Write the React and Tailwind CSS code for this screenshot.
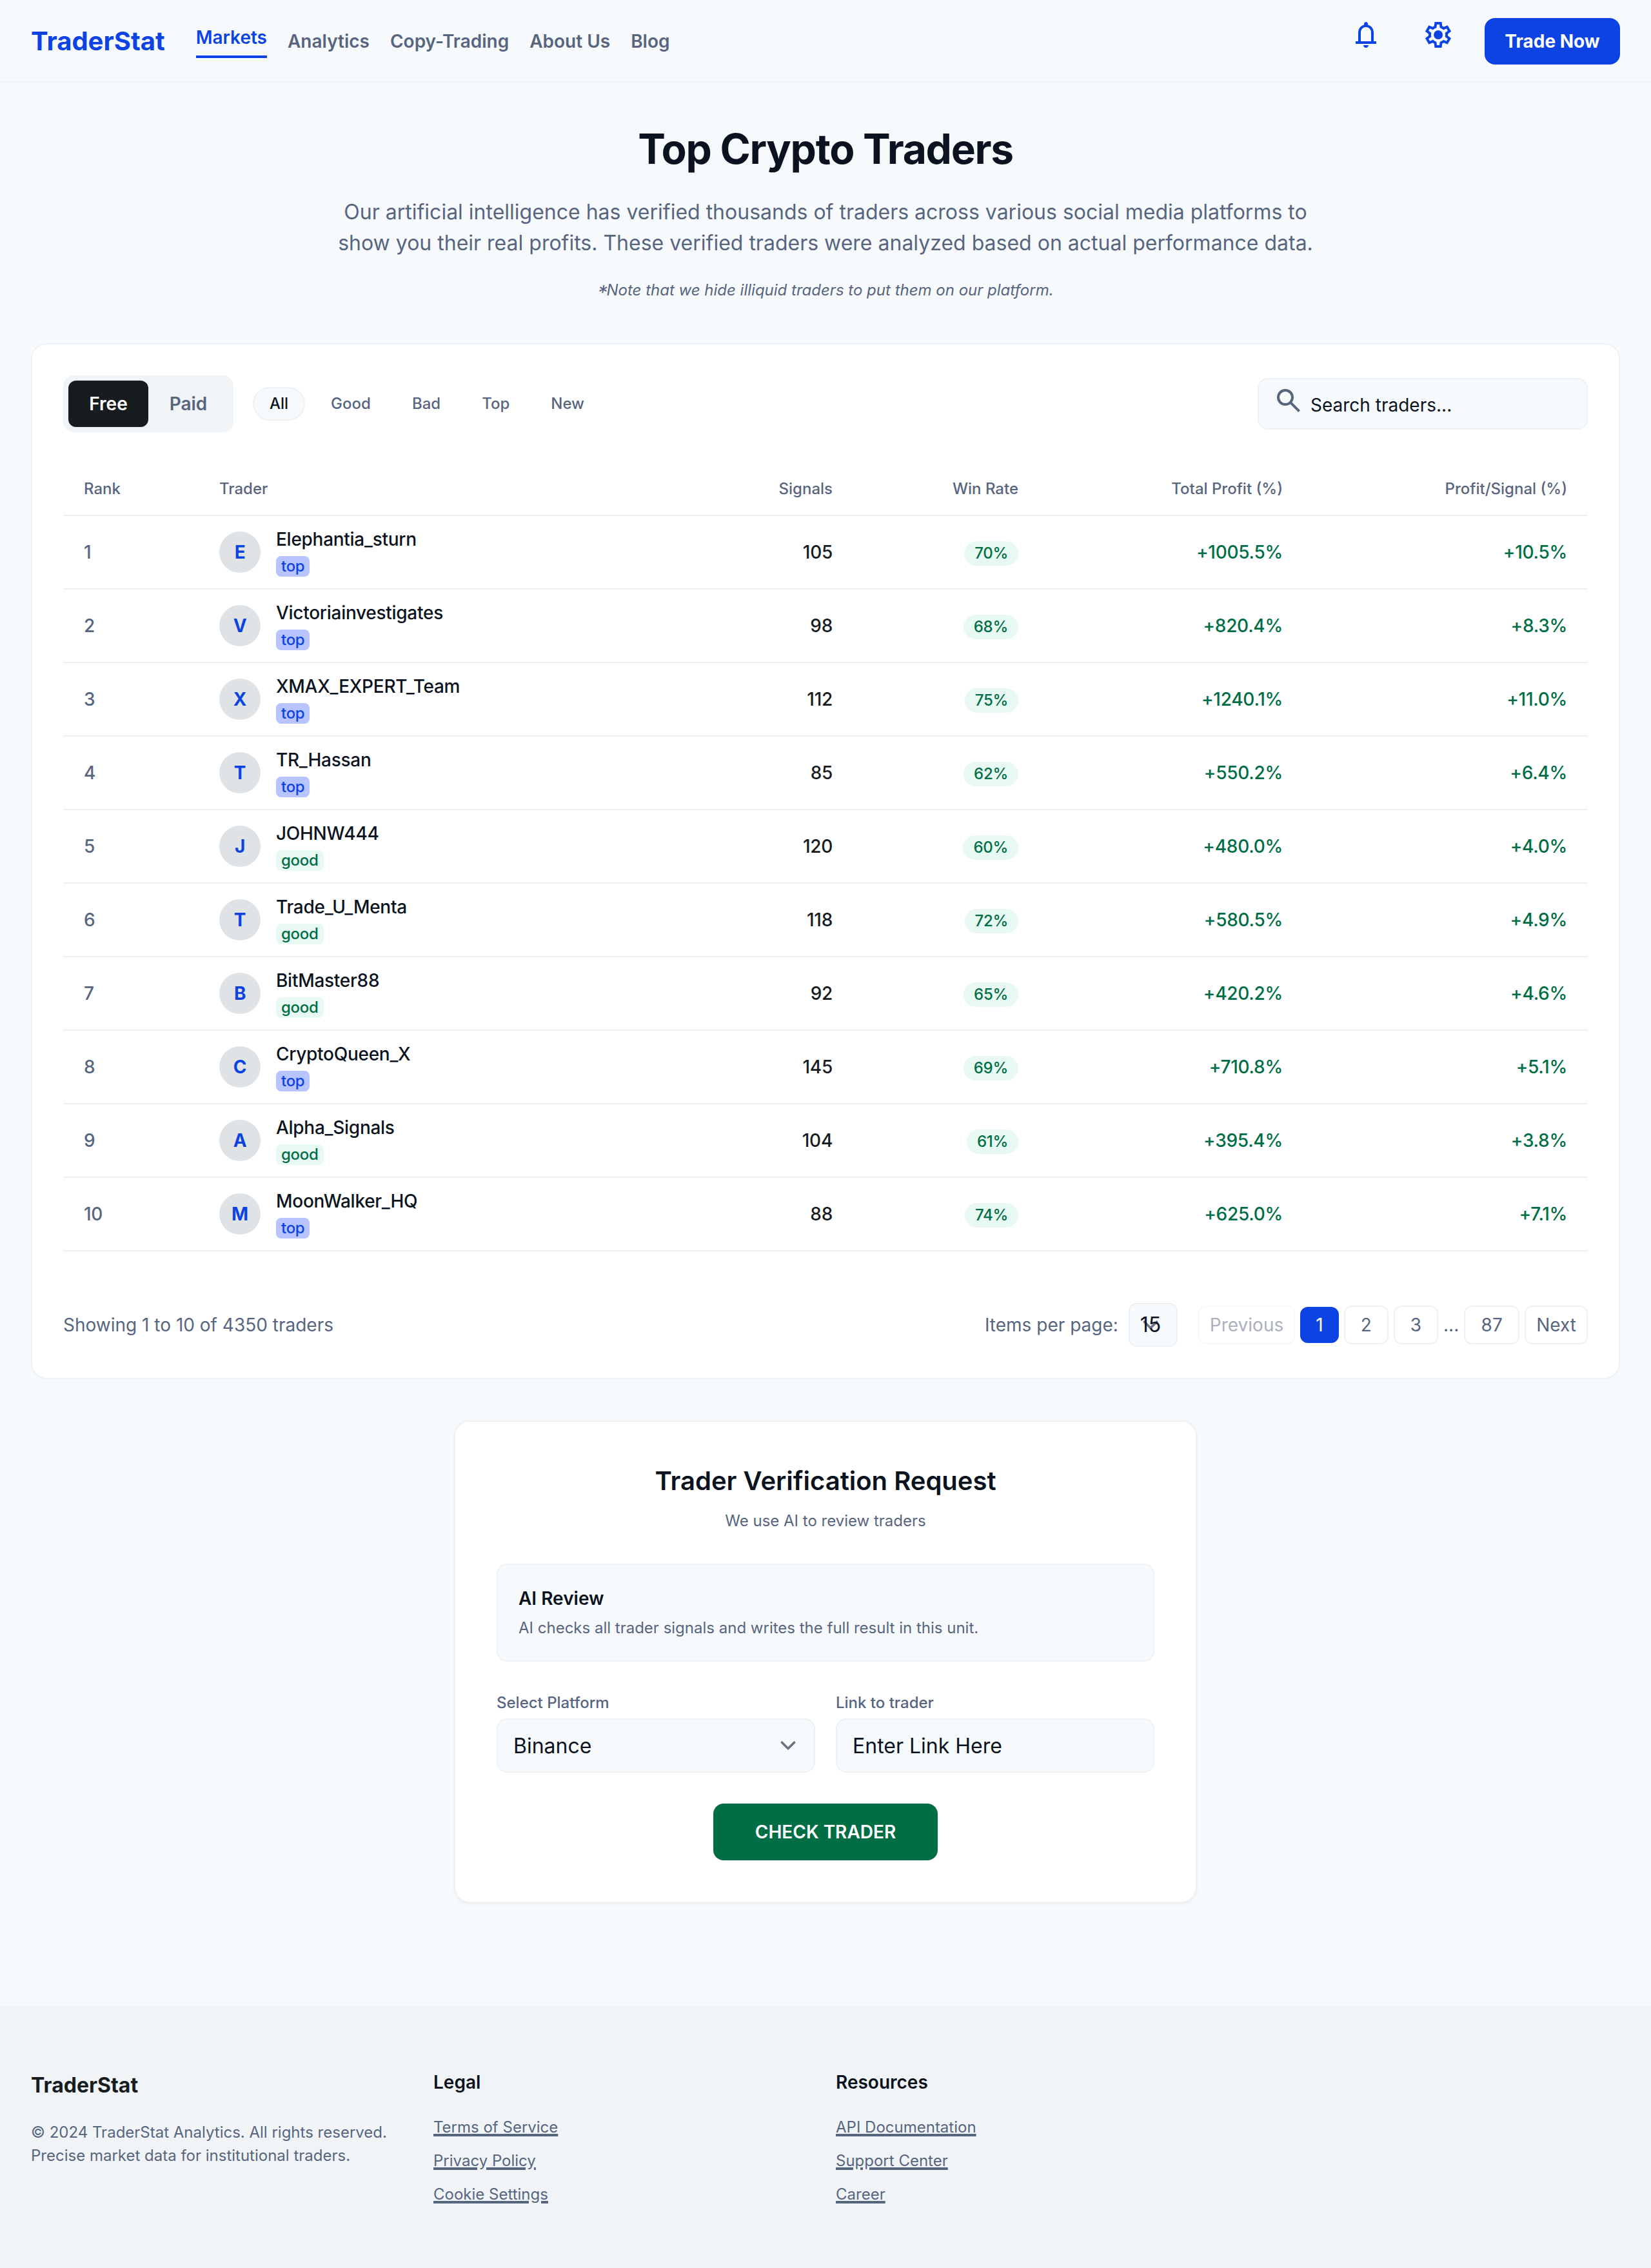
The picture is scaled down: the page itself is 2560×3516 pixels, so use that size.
import { useState } from 'react';
import clsx from 'clsx';

const navItems = ['Markets', 'Analytics', 'Copy-Trading', 'About Us', 'Blog'];

const filters = ['All', 'Good', 'Bad', 'Top', 'New'];

const traders = [
  { name: 'Elephantia_sturn', tag: 'top', signals: 105, winRate: '70%', profit: '+1005.5%', perSignal: '+10.5%' },
  { name: 'Victoriainvestigates', tag: 'top', signals: 98, winRate: '68%', profit: '+820.4%', perSignal: '+8.3%' },
  { name: 'XMAX_EXPERT_Team', tag: 'top', signals: 112, winRate: '75%', profit: '+1240.1%', perSignal: '+11.0%' },
  { name: 'TR_Hassan', tag: 'top', signals: 85, winRate: '62%', profit: '+550.2%', perSignal: '+6.4%' },
  { name: 'JOHNW444', tag: 'good', signals: 120, winRate: '60%', profit: '+480.0%', perSignal: '+4.0%' },
  { name: 'Trade_U_Menta', tag: 'good', signals: 118, winRate: '72%', profit: '+580.5%', perSignal: '+4.9%' },
  { name: 'BitMaster88', tag: 'good', signals: 92, winRate: '65%', profit: '+420.2%', perSignal: '+4.6%' },
  { name: 'CryptoQueen_X', tag: 'top', signals: 145, winRate: '69%', profit: '+710.8%', perSignal: '+5.1%' },
  { name: 'Alpha_Signals', tag: 'good', signals: 104, winRate: '61%', profit: '+395.4%', perSignal: '+3.8%' },
  { name: 'MoonWalker_HQ', tag: 'top', signals: 88, winRate: '74%', profit: '+625.0%', perSignal: '+7.1%' },
];

const footerColumns = [
  { title: 'Legal', links: ['Terms of Service', 'Privacy Policy', 'Cookie Settings'] },
  { title: 'Resources', links: ['API Documentation', 'Support Center', 'Career'] },
];

const BellIcon = () => (
  <svg viewBox="0 -960 960 960" className="size-12" fill="currentColor">
    <path d="M160-200v-80h80v-280q0-83 50-147.5T420-792v-28q0-25 17.5-42.5T480-880q25 0 42.5 17.5T540-820v28q80 20 130 84.5T720-560v280h80v80H160Zm320-300Zm0 420q-33 0-56.5-23.5T400-160h160q0 33-23.5 56.5T480-80ZM320-280h320v-280q0-66-47-113t-113-47q-66 0-113 47t-47 113v280Z" />
  </svg>
);

const GearIcon = () => (
  <svg viewBox="0 -960 960 960" className="size-12" fill="currentColor">
    <path d="m370-80-16-128q-13-5-24.5-12T307-235l-119 50L78-375l103-78q-1-7-1-13.5v-27q0-6.5 1-13.5L78-585l110-190 119 50q11-8 23-15t24-12l16-128h220l16 128q13 5 24.5 12t22.5 15l119-50 110 190-103 78q1 7 1 13.5v27q0 6.5-2 13.5l103 78-110 190-118-50q-11 8-23 15t-24 12L590-80H370Zm70-80h79l14-106q31-8 57.5-23.5T639-327l99 41 39-68-86-65q5-14 7-29.5t2-31.5q0-16-2-31.5t-7-29.5l86-65-39-68-99 42q-22-23-48.5-38.5T533-694l-13-106h-79l-14 106q-31 8-57.5 23.5T321-633l-99-41-39 68 86 64q-5 15-7 30t-2 32q0 16 2 31t7 30l-86 65 39 68 99-42q22 23 48.5 38.5T427-266l13 106Zm42-180q58 0 99-41t41-99q0-58-41-99t-99-41q-59 0-99.5 41T342-480q0 58 40.5 99t99.5 41Z" />
  </svg>
);

const SearchIcon = () => (
  <svg viewBox="0 -960 960 960" className="size-12" fill="currentColor">
    <path d="M784-120 532-372q-30 24-69 38t-83 14q-109 0-184.5-75.5T120-580q0-109 75.5-184.5T380-840q109 0 184.5 75.5T640-580q0 44-14 83t-38 69l252 252-56 56ZM380-400q75 0 127.5-52.5T560-580q0-75-52.5-127.5T380-760q-75 0-127.5 52.5T200-580q0 75 52.5 127.5T380-400Z" />
  </svg>
);

const ChevronIcon = ({ className }) => (
  <svg viewBox="0 0 20 20" className={clsx('size-12', className)} fill="none">
    <path d="M6 8l4 4 4-4" stroke="#6b7280" strokeWidth="1.5" strokeLinecap="round" strokeLinejoin="round" />
  </svg>
);

const Header = () => (
  <header className="flex h-32 items-center justify-between border-b-2 border-[#eef2f5] px-12 pt-0.5">
    <div className="flex items-center gap-12">
      <span className="text-[40px] leading-[56px] font-bold text-[#0d43e2]">TraderStat</span>
      <nav className="flex items-center gap-8 text-[28px] leading-10 font-semibold text-[#57657f]">
        {navItems.map((item, i) => (
          <a
            key={item}
            href="#"
            className={clsx(i === 0 && 'border-b-4 border-[#0d43e2] pb-2 text-[#0d43e2]')}
          >
            {item}
          </a>
        ))}
      </nav>
    </div>
    <div className="flex items-center text-[#0d43e2]">
      <button className="mr-16 pb-5">
        <BellIcon />
      </button>
      <button className="mr-12 pb-5">
        <GearIcon />
      </button>
      <button className="h-18 w-[210px] rounded-2xl bg-[#0d43e2] text-[28px] leading-10 font-bold text-white">
        Trade Now
      </button>
    </div>
  </header>
);

const Hero = () => (
  <section className="flex flex-col items-center pt-16 text-center">
    <h1 className="text-[64px] leading-[78px] font-bold tracking-[-0.02em] text-[#0b1320]">Top Crypto Traders</h1>
    <p className="mt-[35px] text-[32px] leading-12 text-[#57657f]">
      Our artificial intelligence has verified thousands of traders across various social media platforms to
      <br />
      show you their real profits. These verified traders were analyzed based on actual performance data.
    </p>
    <p className="mt-[31px] pl-0.5 text-2xl leading-9 text-[#57657f] italic">
      <span className="inline-block translate-y-1 scale-125">*</span>Note that we hide illiquid traders to put them on our platform.
    </p>
  </section>
);

const Toolbar = () => {
  const [plan, setPlan] = useState('Free');
  const [filter, setFilter] = useState('All');

  return (
    <div className="flex items-center justify-between">
      <div className="flex items-center gap-8">
        <div className="flex rounded-2xl bg-[#f0f4f7] p-2">
          {['Free', 'Paid'].map((item) => (
            <button
              key={item}
              onClick={() => setPlan(item)}
              className={clsx(
                'h-18 w-[124px] rounded-xl text-[28px] leading-10 font-semibold',
                plan === item ? 'bg-[#171c1f] text-white' : 'text-[#57657f]'
              )}
            >
              {item}
            </button>
          ))}
        </div>
        <div className="-ml-0.5 flex gap-4">
          {filters.map((item) => (
            <button
              key={item}
              onClick={() => setFilter(item)}
              className={clsx(
                'h-13 rounded-full px-6 text-2xl leading-8 font-medium',
                filter === item ? 'border-2 border-[#eef2f5] bg-[#f6fafd] text-[#0b1320]' : 'text-[#57657f]'
              )}
            >
              {item}
            </button>
          ))}
        </div>
      </div>
      <div className="flex h-20 w-128 items-center rounded-2xl border-2 border-[#eef2f5] bg-[#f6fafd] pl-[22px] text-[#57657f]">
        <span className="pb-[10px]">
          <SearchIcon />
        </span>
        <span className="pt-1 pl-[10px] text-[28px] leading-10 text-[#0b1320]">Search traders...</span>
      </div>
    </div>
  );
};

const cell = 'border-b-2 border-[#eef2f5] px-8 py-0';

const TraderRow = ({ rank, trader }) => (
  <tr className="h-[114px] text-right text-[28px] leading-10 font-medium tracking-[-0.01em]">
    <td className={clsx(cell, 'text-left text-[#57657f]')}>{rank}</td>
    <td className={clsx(cell, 'text-left')}>
      <div className="flex items-center gap-6">
        <div className="flex size-16 items-center justify-center rounded-full bg-[#dfe3e6] font-bold text-[#0d43e2]">
          {trader.name[0]}
        </div>
        <div className="flex flex-col items-start gap-1.5 pb-0.5">
          <span className="text-[#0b1320]">{trader.name}</span>
          <span
            className={clsx(
              'h-8 rounded-lg px-2 text-2xl leading-8',
              trader.tag === 'top' ? 'bg-[#b8c4ff] text-[#0d43e2]' : 'bg-[#e8f8f2] text-[#006e45]'
            )}
          >
            {trader.tag}
          </span>
        </div>
      </div>
    </td>
    <td className={clsx(cell, 'text-[#171c1f]')}>{trader.signals}</td>
    <td className={cell}>
      <div className="flex justify-end pt-[3px]">
        <span className="h-[38px] rounded-full bg-[#e8f8f2] px-4 text-2xl leading-[38px] text-[#006e45]">
          {trader.winRate}
        </span>
      </div>
    </td>
    <td className={clsx(cell, 'text-[#006e45]')}>{trader.profit}</td>
    <td className={clsx(cell, 'text-[#006e45]')}>{trader.perSignal}</td>
  </tr>
);

const TraderTable = () => (
  <table className="mt-12 w-full table-fixed border-separate border-spacing-0">
    <colgroup>
      <col className="w-[210px]" />
      <col className="w-[815px]" />
      <col className="w-[200px]" />
      <col className="w-[288px]" />
      <col className="w-[410px]" />
      <col />
    </colgroup>
    <thead>
      <tr className="h-[82px] text-right text-2xl text-[#57657f]">
        <th className={clsx(cell, 'text-left font-medium')}>Rank</th>
        <th className={clsx(cell, 'text-left font-medium')}>Trader</th>
        <th className={clsx(cell, 'font-medium')}>Signals</th>
        <th className={clsx(cell, 'font-medium')}>Win Rate</th>
        <th className={clsx(cell, 'font-medium')}>Total Profit (%)</th>
        <th className={clsx(cell, 'font-medium')}>Profit/Signal (%)</th>
      </tr>
    </thead>
    <tbody>
      {traders.map((trader, i) => (
        <TraderRow key={trader.name} rank={i + 1} trader={trader} />
      ))}
    </tbody>
  </table>
);

const Pagination = () => (
  <div className="mt-20 flex items-center justify-between text-[28px] leading-10 text-[#57657f]">
    <span>Showing 1 to 10 of 4350 traders</span>
    <div className="flex items-center gap-8">
      <div className="flex items-center gap-4">
        <span>Items per page:</span>
        <div className="relative h-17 w-19 rounded-xl border-2 border-[#eef2f5] bg-[#f6fafd] pl-4">
          {/* the chevron sits behind the value */}
          <ChevronIcon className="absolute top-2 right-4" />
          <span className="relative text-[32px] leading-16 text-[#0b1320]">15</span>
        </div>
      </div>
      <div className="flex items-center gap-2">
        <button className="rounded-xl border-2 border-[#eef2f5] px-4 py-2 opacity-50">Previous</button>
        <button className="rounded-xl bg-[#0d43e2] px-6 py-2 text-white">1</button>
        <button className="rounded-xl border-2 border-[#eef2f5] px-6 py-2">2</button>
        <button className="rounded-xl border-2 border-[#eef2f5] px-6 py-2">3</button>
        <span>...</span>
        <button className="w-[86px] rounded-xl border-2 border-[#eef2f5] py-2">87</button>
        <button className="rounded-xl border-2 border-[#eef2f5] px-4 py-2">Next</button>
      </div>
    </div>
  </div>
);

const VerificationCard = () => (
  <section className="mx-auto mt-16 flex w-288 flex-col rounded-3xl border-2 border-[#eef2f5] bg-white p-16 shadow-[0_2px_4px_rgba(0,0,0,0.05)]">
    <h2 className="text-center text-[40px] leading-14 font-semibold text-[#0b1320]">Trader Verification Request</h2>
    <p className="mt-4 text-center text-2xl leading-9 text-[#57657f]">We use AI to review traders</p>
    <div className="mt-12 rounded-2xl border-2 border-[#eef2f5] bg-[#f6fafd] p-8">
      <h3 className="text-[28px] leading-10 font-semibold text-[#0b1320]">AI Review</h3>
      <p className="mt-2 text-2xl leading-9 text-[#57657f]">
        AI checks all trader signals and writes the full result in this unit.
      </p>
    </div>
    <div className="mt-12 grid grid-cols-2 gap-8">
      <div>
        <label className="block text-2xl font-medium text-[#57657f]">Select Platform</label>
        <div className="mt-2 flex h-21 items-center justify-between rounded-2xl border-2 border-[#eef2f5] bg-[#f6fafd] pr-4 pl-6 text-[32px] text-[#0b1320]">
          <span className="pt-0.5">Binance</span>
          <ChevronIcon />
        </div>
      </div>
      <div>
        <label className="block text-2xl font-medium text-[#57657f]">Link to trader</label>
        <div className="mt-2 flex h-21 items-center rounded-2xl border-2 border-[#eef2f5] bg-[#f6fafd] px-6 pt-0.5 text-[32px] text-[#0b1320]">
          Enter Link Here
        </div>
      </div>
    </div>
    <button className="mt-12 h-22 w-[348px] self-center rounded-2xl bg-[#006e45] text-[28px] leading-10 font-semibold text-white">
      CHECK TRADER
    </button>
  </section>
);

const Footer = () => (
  <footer className="mt-40 grid h-[406px] grid-cols-4 gap-8 bg-[#f0f4f7] px-12 pt-[97px] text-2xl text-[#57657f]">
    <div>
      <div className="text-[32px] leading-[52px] font-bold text-[#171c1f]">TraderStat</div>
      <p className="mt-[29px] leading-9">
        © 2024 TraderStat Analytics. All rights reserved.
        <br />
        Precise market data for institutional traders.
      </p>
    </div>
    {footerColumns.map((column) => (
      <div key={column.title}>
        <h4 className="text-[28px] leading-[42px] font-semibold text-[#0b1320]">{column.title}</h4>
        <ul className="mt-[31px] flex flex-col gap-4">
          {column.links.map((link) => (
            <li key={link} className="leading-9">
              <a href="#" className="underline decoration-4 underline-offset-2">
                {link}
              </a>
            </li>
          ))}
        </ul>
      </div>
    ))}
  </footer>
);

export default function App() {
  return (
    <div className="min-h-[3516px] w-full bg-[#f6fafd] font-['Inter',sans-serif] antialiased">
      <Header />
      <main>
        <Hero />
        <section className="mx-12 mt-16 rounded-3xl border-2 border-[#eef2f5] bg-white p-12">
          <Toolbar />
          <TraderTable />
          <Pagination />
        </section>
        <VerificationCard />
      </main>
      <Footer />
    </div>
  );
}
